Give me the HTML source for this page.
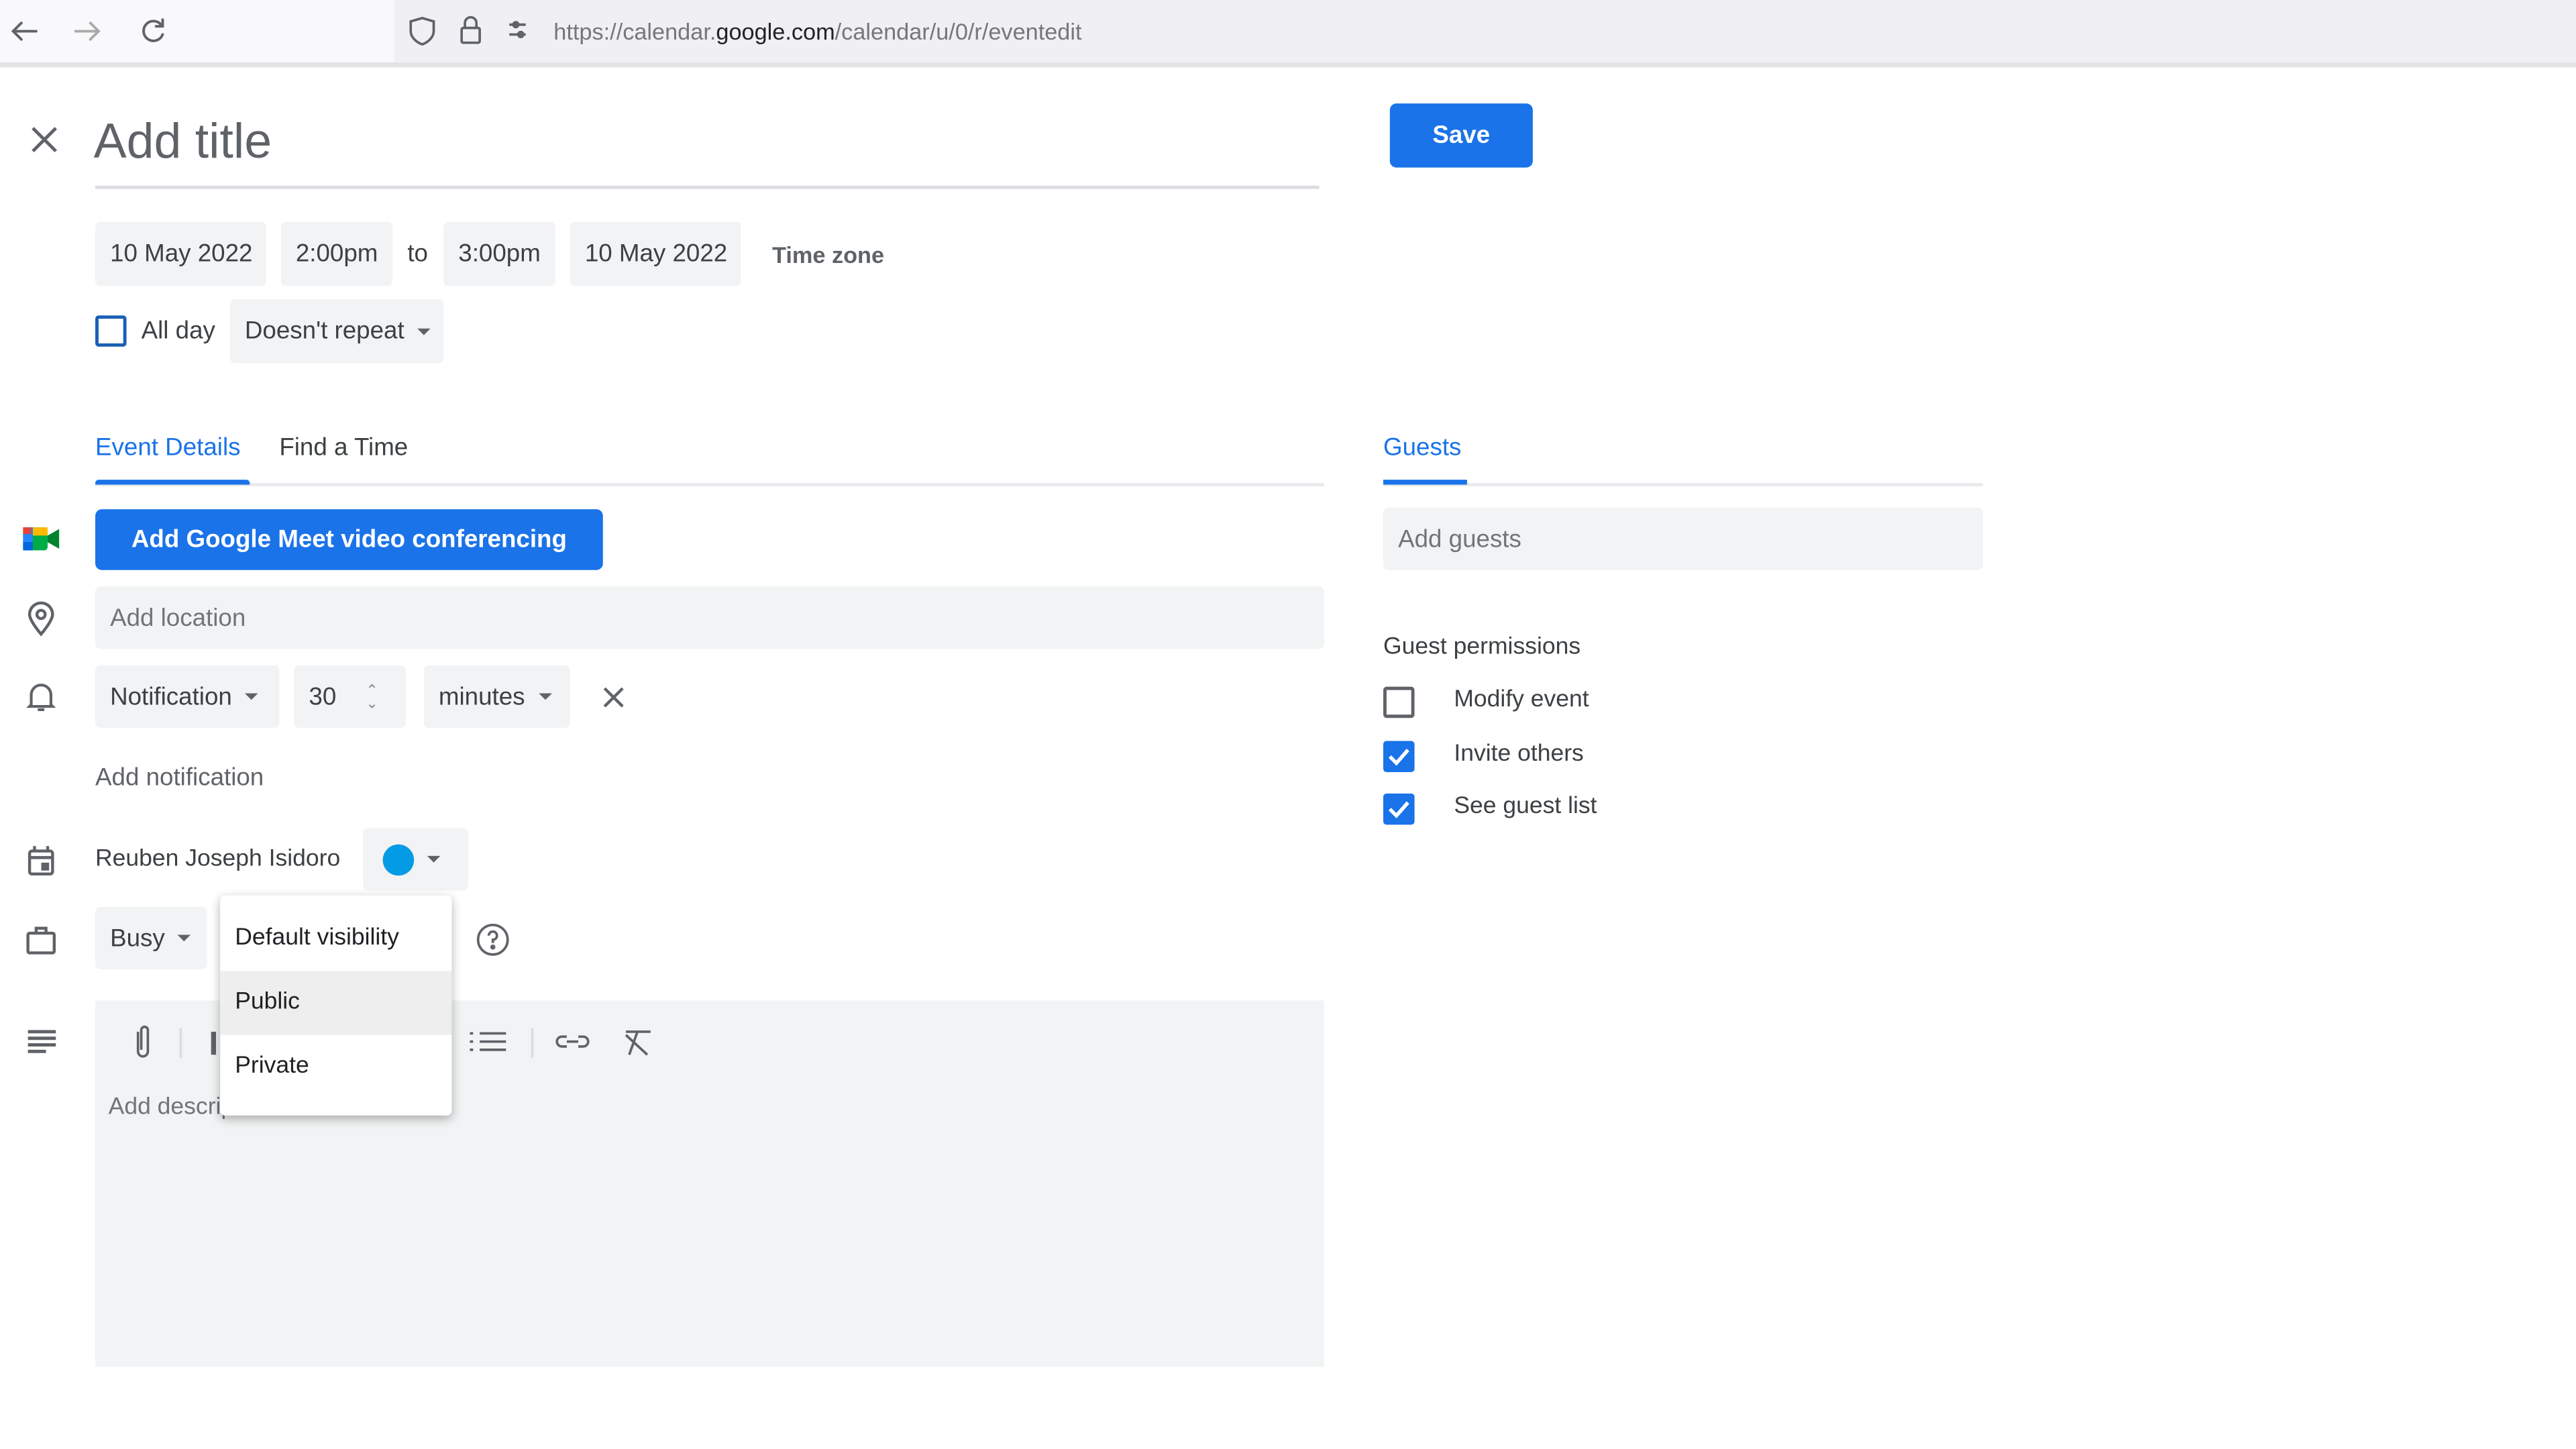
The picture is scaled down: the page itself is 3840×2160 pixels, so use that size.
<!DOCTYPE html>
<html><head><meta charset="utf-8"><style>
*{margin:0;padding:0;box-sizing:border-box}
html,body{width:3840px;height:2160px;overflow:hidden;background:#fff}
#w{position:absolute;left:0;top:0;width:1568px;height:882px;transform:scale(2.44898);transform-origin:0 0;font-family:"Liberation Sans",Arial,sans-serif;color:#3c4043}
.a{position:absolute}
.chip{position:absolute;background:#f1f3f4;border-radius:3px;font-size:15px;color:#3c4043;display:flex;align-items:center;padding-left:9px}
.t{position:absolute;font-size:15px;color:#3c4043;white-space:nowrap}
.cb{position:absolute;width:19px;height:19px;border:2px solid #5f6368;border-radius:2px}
.cbk{position:absolute;width:19px;height:19px;background:#1a73e8;border-radius:2px}
.tri{display:inline-block;width:0;height:0;border-left:4px solid transparent;border-right:4px solid transparent;border-top:4px solid #5f6368;margin-left:8px}
svg{position:absolute}
</style></head><body><div id="w">
<div class="a" style="left:0;top:0;width:1568px;height:38px;background:#f9f9fb"></div>
<div class="a" style="left:240px;top:0;width:1328px;height:38px;background:#f0f0f4"></div>
<div class="a" style="left:0;top:38px;width:1568px;height:3px;background:#e3e3e6"></div>
<svg style="left:5px;top:10px" width="100" height="20" fill="none" stroke-width="1.6" stroke-linecap="round">
<path d="M17 9H3M8 4L3 9L8 14" stroke="#5f6368"/>
<path d="M41 9H55M50 4L55 9L50 14" stroke="#aaa"/>
<path d="M93 5A6 6 0 1 0 94 11M94 2V6H90" stroke="#5f6368"/>
</svg>
<svg style="left:248px;top:9px" width="80" height="20" fill="none" stroke="#5f6368" stroke-width="1.5">
<path d="M9 2L16 4V10C16 14 12 17 9 18C6 17 2 14 2 10V4Z"/>
<rect x="33" y="8" width="11" height="9" rx="1"/><path d="M35 8V5A3.5 3.5 0 0 1 42 5V8"/>
<path d="M62 6H72M62 12H72"/><circle cx="66" cy="6" r="1.5"/><circle cx="69" cy="12" r="1.5"/>
</svg>
<div class="t" style="left:337px;top:11px;font-size:14px;color:#777">https://calendar.<span style="color:#222">google.com</span>/calendar/u/0/r/eventedit</div>

<svg style="left:19px;top:77px" width="16" height="16" stroke="#5f6368" stroke-width="2"><path d="M1 1L15 15M15 1L1 15"/></svg>
<div class="t" style="left:57px;top:70px;font-size:30px;color:#5f6368">Add title</div>
<div class="a" style="left:58px;top:113px;width:745px;height:2px;background:#dadce0"></div>
<div class="a" style="left:846px;top:63px;width:87px;height:39px;background:#1a73e8;border-radius:4px;color:#fff;font-weight:bold;font-size:15px;display:flex;align-items:center;justify-content:center">Save</div>

<div class="chip" style="left:58px;top:135px;width:104px;height:39px">10 May 2022</div>
<div class="chip" style="left:171px;top:135px;width:68px;height:39px">2:00pm</div>
<div class="t" style="left:248px;top:146px">to</div>
<div class="chip" style="left:270px;top:135px;width:68px;height:39px">3:00pm</div>
<div class="chip" style="left:347px;top:135px;width:104px;height:39px">10 May 2022</div>
<div class="t" style="left:470px;top:147px;font-weight:bold;color:#5f6368;font-size:14px">Time zone</div>
<div class="cb" style="left:58px;top:192px;border-color:#1a5fb4"></div>
<div class="t" style="left:86px;top:193px">All day</div>
<div class="chip" style="left:140px;top:182px;width:130px;height:39px">Doesn't repeat<span class="tri"></span></div>

<div class="t" style="left:58px;top:264px;color:#1a73e8">Event Details</div>
<div class="t" style="left:170px;top:264px">Find a Time</div>
<div class="a" style="left:58px;top:294px;width:748px;height:2px;background:#e8eaed"></div>
<div class="a" style="left:58px;top:292px;width:94px;height:3px;background:#1a73e8;border-radius:2px 2px 0 0"></div>

<svg style="left:14px;top:319px" width="24" height="18"><rect x="0" y="2" width="15" height="14" rx="2" fill="#00ac47"/><rect x="0" y="2" width="6" height="14" fill="#2684fc"/><rect x="6" y="2" width="9" height="5" fill="#ffba00"/><rect x="0" y="11" width="6" height="5" fill="#0066da"/><path d="M15 7L22 3V15L15 11Z" fill="#00832d"/><rect x="0" y="2" width="5" height="4" fill="#ea4335"/></svg>
<div class="a" style="left:58px;top:310px;width:309px;height:37px;background:#1a73e8;border-radius:4px;color:#fff;font-weight:bold;font-size:15px;display:flex;align-items:center;justify-content:center">Add Google Meet video conferencing</div>

<svg style="left:16px;top:366px" width="18" height="22" fill="none" stroke="#5f6368" stroke-width="1.8"><path d="M9 20C9 20 2 12 2 8A7 7 0 0 1 16 8C16 12 9 20 9 20Z"/><circle cx="9" cy="8" r="2.5"/></svg>
<div class="chip" style="left:58px;top:357px;width:748px;height:38px;color:#70757a">Add location</div>

<svg style="left:16px;top:415px" width="18" height="20" fill="none" stroke="#5f6368" stroke-width="1.7"><path d="M3 14V8A6 6 0 0 1 15 8V14L16 15H2ZM7 17H11"/></svg>
<div class="chip" style="left:58px;top:405px;width:112px;height:38px">Notification<span class="tri"></span></div>
<div class="chip" style="left:179px;top:405px;width:68px;height:38px">30<span style="margin-left:18px;font-size:9px;color:#888;line-height:8px">⌃<br>⌄</span></div>
<div class="chip" style="left:258px;top:405px;width:89px;height:38px">minutes<span class="tri"></span></div>
<svg style="left:367px;top:418px" width="13" height="13" stroke="#5f6368" stroke-width="1.8"><path d="M1 1L12 12M12 1L1 12"/></svg>
<div class="t" style="left:58px;top:465px;color:#5f6368">Add notification</div>

<svg style="left:16px;top:514px" width="18" height="20" fill="none" stroke="#5f6368" stroke-width="1.8"><rect x="2" y="4" width="14" height="14" rx="1.5"/><path d="M2 8H16M5 1V4M13 1V4" /><rect x="10" y="12" width="3" height="3" fill="#5f6368"/></svg>
<div class="t" style="left:58px;top:515px;font-size:14.5px">Reuben Joseph Isidoro</div>
<div class="chip" style="left:221px;top:504px;width:64px;height:38px;padding-left:12px"><span style="width:19px;height:19px;border-radius:50%;background:#039be5;display:inline-block"></span><span class="tri"></span></div>

<svg style="left:15px;top:562px" width="20" height="20" fill="none" stroke="#5f6368" stroke-width="1.8"><rect x="2" y="6" width="16" height="12" rx="1"/><path d="M7 6V3H13V6"/></svg>
<div class="chip" style="left:58px;top:552px;width:68px;height:38px">Busy<span class="tri"></span></div>
<svg style="left:290px;top:562px" width="20" height="20" fill="none" stroke="#5f6368" stroke-width="1.5"><circle cx="10" cy="10" r="9"/><path d="M7.5 7.5A2.5 2.5 0 1 1 10 10V12"/><circle cx="10" cy="14.5" r=".8" fill="#5f6368"/></svg>

<svg style="left:16px;top:626px" width="20" height="16" stroke="#5f6368" stroke-width="2"><path d="M1 2H18M1 6H18M1 10H18M1 14H12"/></svg>
<div class="a" style="left:58px;top:609px;width:748px;height:223px;background:#f1f3f4"></div>
<svg style="left:78px;top:622px" width="320" height="26" fill="none" stroke="#5f6368" stroke-width="1.5">
<path d="M6 6V18A3 3 0 0 0 12 18V5A2 2 0 0 0 8 5V17"/>
<path d="M32 4V22M246 4V22" stroke="#dadce0"/>
<path d="M52 6V20" stroke-width="3"/>
<path d="M214 7H230M214 12H230M214 17H230M208 7H210M208 12H210M208 17H210"/>
<path d="M267 9H264A3 3 0 0 0 264 15H267M274 9H277A3 3 0 0 1 277 15H274M267 12H274"/>
<path d="M303 6H318M310 6L305 20M303 8L316 20"/>
</svg>
<div class="t" style="left:66px;top:666px;color:#70757a;font-size:14.5px">Add description</div>

<div class="a" style="left:134px;top:545px;width:141px;height:134px;background:#fff;box-shadow:0 2px 6px rgba(0,0,0,.3);border-radius:3px"></div>
<div class="a" style="left:134px;top:591px;width:141px;height:39px;background:#eeeeee"></div>
<div class="t" style="left:143px;top:563px;font-size:14.5px;color:#202124">Default visibility</div>
<div class="t" style="left:143px;top:602px;font-size:14.5px;color:#202124">Public</div>
<div class="t" style="left:143px;top:641px;font-size:14.5px;color:#202124">Private</div>

<div class="t" style="left:842px;top:264px;color:#1a73e8">Guests</div>
<div class="a" style="left:842px;top:294px;width:365px;height:2px;background:#e8eaed"></div>
<div class="a" style="left:842px;top:292px;width:51px;height:3px;background:#1a73e8"></div>
<div class="chip" style="left:842px;top:309px;width:365px;height:38px;color:#70757a">Add guests</div>
<div class="t" style="left:842px;top:386px;color:#3c4043;font-size:14.5px">Guest permissions</div>
<div class="cb" style="left:842px;top:418px"></div>
<div class="t" style="left:885px;top:418px;font-size:14.5px">Modify event</div>
<div class="cbk" style="left:842px;top:451px"><svg width="19" height="19" fill="none" stroke="#fff" stroke-width="2.2"><path d="M4 9.5L8 13.5L15 5.5"/></svg></div>
<div class="t" style="left:885px;top:451px;font-size:14.5px">Invite others</div>
<div class="cbk" style="left:842px;top:483px"><svg width="19" height="19" fill="none" stroke="#fff" stroke-width="2.2"><path d="M4 9.5L8 13.5L15 5.5"/></svg></div>
<div class="t" style="left:885px;top:483px;font-size:14.5px">See guest list</div>
</div></body></html>
